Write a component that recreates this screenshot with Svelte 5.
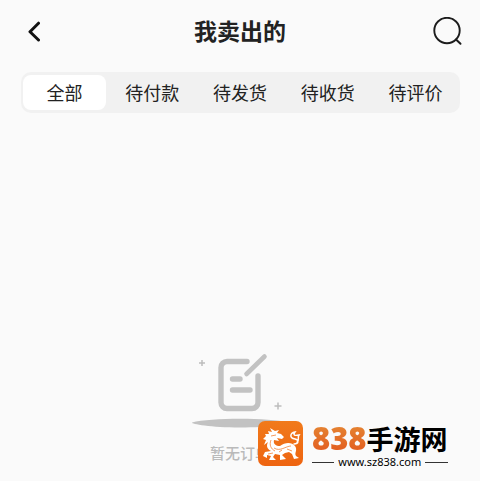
<script>
  const tabs = ['全部', '待付款', '待发货', '待收货', '待评价'];
  let active = $state(0);
</script>

<div class="page">
  <header>
    <button class="icon" aria-label="返回">
      <svg width="14" height="24" viewBox="0 0 14 24">
        <path d="M12.500 3.200L4 11.700L12.500 20" fill="none" stroke="#111" stroke-width="3" stroke-linecap="round" stroke-linejoin="round" />
      </svg>
    </button>
    <h1>我卖出的</h1>
    <button class="icon" aria-label="搜索">
      <svg width="30" height="30" viewBox="0 0 30 30">
        <circle cx="15" cy="13.500" r="12.700" fill="none" stroke="#1c1c1c" stroke-width="1.900" />
        <path d="M24 22.500L28.500 26.800" stroke="#1c1c1c" stroke-width="2" stroke-linecap="round" />
      </svg>
    </button>
  </header>

  <nav>
    {#each tabs as tab, i}
      <button class:active={active === i} onclick={() => (active = i)}>{tab}</button>
    {/each}
  </nav>

  <main>
    <div class="empty">
      <svg width="98" height="78" viewBox="0 0 98 78" aria-hidden="true">
        <path d="M1 71.500C20 66.500 78 66.500 97 71.500C98 73 78 76.500 49 76.500C20 76.500 0 73 1 71.500Z" fill="#c2c2c2" />
        <g fill="none" stroke="#c2c2c2" stroke-width="5.400" stroke-linecap="round">
          <path d="M56 10.500H36a6 6 0 0 0-6 6V51.500a6 6 0 0 0 6 6H61a6 6 0 0 0 6-6V25" />
          <path d="M55.500 23L73.500 5.500" stroke-width="4.600" />
          <path d="M41.500 28H49M41.500 39H59" />
        </g>
        <path d="M8 12h6M11 9v6M83.500 55h7M87 51.500v7" stroke="#bdbdbd" stroke-width="1.500" />
      </svg>
      <p>暂无订单</p>

      <a class="brand" href="http://www.sz838.com">
        <svg width="45" height="45" viewBox="0 0 45 45" aria-hidden="true">
          <defs>
            <linearGradient id="tile" x1="0" y1="0" x2="0" y2="1">
              <stop offset="0" stop-color="#f17a1b" />
              <stop offset="1" stop-color="#ee6410" />
            </linearGradient>
          </defs>
          <rect width="45" height="45" rx="7" fill="url(#tile)" />
          <path d="M5 18L8 15L7 13L11 13L10 10L14 11L12 7L17 10L21 9L19 12L23 13L26 16L24 18L19 17L21 20L16 19C15 23 18 25 22 25C27 21 34 21 37 25C40 29 36 32 38 35L41 37L36 38L34 33L31 31L27 32L24 34L28 38L22 39L22 34L17 33L15 36L18 39L11 39L13 35L9 34L9 37L5 35L7 31L13 30C9 28 8 25 10 21L6 24L8 19Z" fill="#fff" />
          <path d="M36 23C41 23 41 19 37 18C31 17 32 12 37 11C35 14 36 15 41 14C39 17 42 19 39 21" fill="none" stroke="#fff" stroke-width="1.500" stroke-linecap="round" />
          <path d="M13 15L18 14M13 19C11 24 13 28 17 30M16 27C22 31 28 25 33 25M21 31L24 29M29 28L34 30M10 33L15 32" fill="none" stroke="#f0701a" stroke-width="0.700" />
        </svg>
        <span class="words">
          <span class="name"><b>838</b>手游网</span>
          <span class="url">www.sz838.com</span>
        </span>
      </a>
    </div>
  </main>
</div>

<style>
  :global(body) {
    margin: 0;
    background: #fafafa;
  }
  .page {
    font-family: "Noto Sans", "Noto Sans CJK SC", sans-serif;
    color: #222;
  }
  button {
    border: 0;
    padding: 0;
    background: none;
    color: inherit;
    font: inherit;
    cursor: pointer;
  }
  svg {
    display: block;
  }
  header {
    display: flex;
    align-items: center;
    justify-content: space-between;
    height: 64px;
    padding: 0 17px;
  }
  .icon {
    display: flex;
    align-items: center;
    justify-content: center;
    width: 32px;
    height: 32px;
  }
  h1 {
    margin: 0;
    padding-bottom: 2px;
    font-size: 23px;
    line-height: 32px;
    font-weight: 700;
  }
  nav {
    display: grid;
    grid-template-columns: repeat(5, 1fr);
    margin: 8px 20px 0 21px;
    padding: 3px 0;
    border-radius: 10px;
    background: #f1f1f1;
  }
  nav button {
    margin: 0 3px 0 2px;
    padding-top: 1px;
    border-radius: 8px;
    font-size: 18px;
    line-height: 34px;
  }
  nav .active {
    background: #fff;
  }
  main {
    display: flex;
    justify-content: center;
    padding: 238px 0 24px;
  }
  .empty {
    position: relative;
    display: flex;
    flex-direction: column;
    align-items: center;
  }
  p {
    margin: 13px 0 0;
    color: #bababa;
    font-size: 15px;
    line-height: 22px;
    font-weight: 500;
  }
  .brand {
    position: absolute;
    top: 70px;
    left: 67px;
    display: flex;
    gap: 9px;
    color: #000;
    text-decoration: none;
    white-space: nowrap;
  }
  .words {
    display: flex;
    flex-direction: column;
  }
  .name {
    display: flex;
    align-items: baseline;
    height: 34px;
    font-size: 27px;
    line-height: 34px;
    font-weight: 700;
  }
  b {
    background: linear-gradient(#e58a35, #e2581d);
    background-clip: text;
    color: transparent;
    font-size: 31px;
  }
  .url {
    display: flex;
    align-items: center;
    gap: 4px;
    font-size: 11px;
    line-height: 14px;
  }
  .url::before,
  .url::after {
    content: "";
    flex: 1;
    height: 1px;
    background: #333;
  }
</style>
